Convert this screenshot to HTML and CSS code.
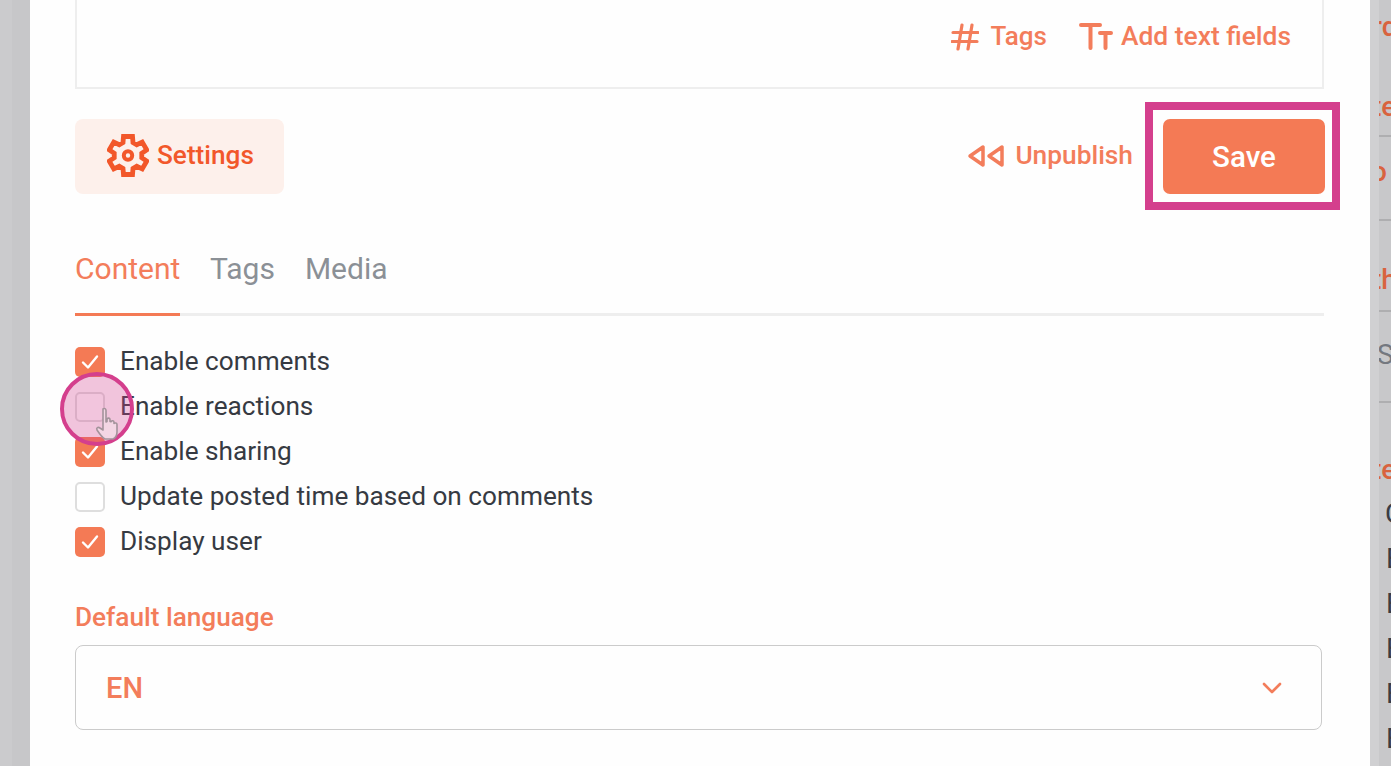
FILE: index.html
```html
<!DOCTYPE html>
<html lang="en">
<head>
<meta charset="utf-8">
<title>Post settings</title>
<link rel="stylesheet" href="styles.css">
</head>
<body>
<div class="stage">
  <div class="gutter-left"></div>
  <main class="panel">
    <section class="editor-box">
      <div class="editor-tool">
        <svg class="icon-hash" viewBox="0 0 28 28" aria-hidden="true"><path d="M11 2 7 26M21 2l-4 24M2 9.500h25M1 18.500h25" fill="none" stroke="currentColor" stroke-width="3.200" stroke-linecap="round"/></svg>
        <span>Tags</span>
      </div>
      <div class="editor-tool tool-text">
        <svg class="icon-tt" viewBox="0 0 34 28" aria-hidden="true"><path d="M2 3h19M11.500 3v23M21 11h11M26.500 11v15" fill="none" stroke="currentColor" stroke-width="4" stroke-linecap="round"/></svg>
        <span>Add text fields</span>
      </div>
    </section>

    <section class="actions">
      <button class="btn-settings">
        <svg class="icon-gear" viewBox="0 0 42 43" aria-hidden="true">
          <path d="M16 8.500 16.500 2.500H25.500L26 8.500 29.760 10.670 35.200 8.100 39.700 15.900 34.760 19.330V23.670L39.700 27.100 35.200 34.900 29.760 32.330 26 34.500 25.500 40.500H16.500L16 34.500 12.240 32.330 6.800 34.900 2.300 27.100 7.240 23.670V19.330L2.300 15.900 6.800 8.100 12.240 10.670Z" fill="none" stroke="currentColor" stroke-width="4.800" stroke-linejoin="miter"/>
          <circle cx="21" cy="21.500" r="4.200" fill="none" stroke="currentColor" stroke-width="4"/>
        </svg>
        <span>Settings</span>
      </button>
      <div class="actions-right">
        <div class="unpublish">
          <svg class="icon-back" viewBox="0 0 38 24" aria-hidden="true"><path d="M16 3v18L3 12zM35 3v18L22 12z" fill="none" stroke="currentColor" stroke-width="3.500" stroke-linejoin="round"/></svg>
          <span>Unpublish</span>
        </div>
        <button class="btn-save">Save</button>
      </div>
      <div class="save-highlight"></div>
    </section>

    <nav class="tabs">
      <div class="tab tab-active">Content</div>
      <div class="tab">Tags</div>
      <div class="tab">Media</div>
    </nav>

    <section class="checks">
      <div class="check-row"><span class="box box-on"><svg viewBox="0 0 30 30" aria-hidden="true"><path d="M8 15.500l5 5 9-11" fill="none" stroke="#fff" stroke-width="2.400" stroke-linecap="round" stroke-linejoin="round"/></svg></span>Enable comments</div>
      <div class="check-row"><span class="box"></span>Enable reactions</div>
      <div class="check-row"><span class="box box-on"><svg viewBox="0 0 30 30" aria-hidden="true"><path d="M8 15.500l5 5 9-11" fill="none" stroke="#fff" stroke-width="2.400" stroke-linecap="round" stroke-linejoin="round"/></svg></span>Enable sharing</div>
      <div class="check-row"><span class="box"></span>Update posted time based on comments</div>
      <div class="check-row"><span class="box box-on"><svg viewBox="0 0 30 30" aria-hidden="true"><path d="M8 15.500l5 5 9-11" fill="none" stroke="#fff" stroke-width="2.400" stroke-linecap="round" stroke-linejoin="round"/></svg></span>Display user</div>
      <div class="click-ring"></div>
      <svg class="cursor-hand" viewBox="0 0 26 36" aria-hidden="true"><path d="M9 3c1.500-1 3-.5 3 1.500V16l1-.5V13c1-1.500 3-1 3 .5v2l1 .2c1-1.500 3-1 3 .5v1.300c1-1 3-.5 3 1V26c0 3-2 6-4 7H11c-2-1-6-6-8-9-1-2 1-3.500 3-2l3 2V4z" fill="#f3d6e4" stroke="#a3939b" stroke-width="1.600" stroke-linejoin="round"/></svg>
    </section>

    <section class="language">
      <div class="language-label">Default language</div>
      <div class="language-select">
        <span>EN</span>
        <svg class="icon-chevron" viewBox="0 0 20 12" aria-hidden="true"><path d="M2 2l8 8 8-8" fill="none" stroke="currentColor" stroke-width="2.600" stroke-linecap="round" stroke-linejoin="round"/></svg>
      </div>
    </section>
  </main>

  <aside class="side">
    <div class="side-row row-a"><span class="frag frag-orange">rd</span></div>
    <div class="side-row row-b"><span class="frag frag-orange">te</span></div>
    <div class="side-row row-c"><span class="frag frag-orange frag-o">o</span></div>
    <div class="side-row row-d"><span class="frag frag-orange">th</span></div>
    <div class="side-row row-e"><span class="frag frag-grey">S</span></div>
    <div class="side-row row-f"><span class="frag frag-orange">te</span></div>
    <div class="side-list">
      <span class="frag-dark frag-c">C</span>
      <span class="frag-dark">E</span>
      <span class="frag-dark">E</span>
      <span class="frag-dark">E</span>
      <span class="frag-dark">E</span>
      <span class="frag-dark">E</span>
    </div>
  </aside>
</div>
</body>
</html>
```
FILE: styles.css
```css
* { box-sizing: border-box; }
html, body { margin: 0; height: 100%; overflow: hidden; }
body { font-family: Roboto, "Liberation Sans", sans-serif; background: #fefefe; }

.stage { display: flex; width: 1391px; height: 766px; overflow: hidden; }
.gutter-left { width: 30px; flex: none; background: linear-gradient(90deg, #cbcbcd 0 12px, #c7c7c9 12px); }

.panel { width: 1340px; flex: none; padding: 0 46px 0 45px; background: #fefefe; position: relative; }

.editor-box {
  height: 89px; padding: 20px 31px 0 0;
  display: flex; justify-content: flex-end; gap: 32px;
  border: 2px solid #eeeeee; border-top: 0;
}
.editor-tool { display: flex; align-items: flex-start; gap: 12px; height: 32px; font-size: 26px; font-weight: 500; line-height: 32px; color: #f37d5b; }
.tool-text { gap: 8px; font-size: 26.400px; }
.icon-hash { width: 28px; height: 28px; margin-top: 3px; }
.icon-tt { width: 34px; height: 28px; margin-top: 2px; }

.actions { position: relative; height: 75px; margin-top: 30px; display: flex; justify-content: space-between; }
.btn-settings {
  width: 209px; height: 75px; padding: 0 0 2px 32px;
  display: flex; align-items: center; gap: 8px;
  border: 0; border-radius: 8px; background: #fdf0eb; color: #f2572a;
  font: 500 26.200px Roboto, sans-serif;
}
.btn-settings span { margin-bottom: 2px; }
.icon-gear { width: 42px; height: 43px; flex: none; }
.actions-right { display: flex; align-items: center; gap: 30px; margin-right: -1px; }
.unpublish { display: flex; align-items: center; gap: 10px; font-size: 26.300px; font-weight: 500; color: #f37d5b; padding-bottom: 4px; }
.icon-back { width: 38px; height: 24px; margin-top: 2px; }
.btn-save {
  width: 162px; height: 75px; border: 0; border-radius: 7px;
  background: #f47a55; color: #fff; font: 500 29.500px Roboto, sans-serif;
}
.save-highlight { position: absolute; left: 1070px; top: -17px; width: 195px; height: 108px; border: 8px solid #d43f8d; }

.tabs { display: flex; gap: 30px; margin-top: 52px; border-bottom: 3px solid #eeeeee; height: 70px; }
.tab { height: 70px; padding-top: 3px; font-size: 30px; line-height: 40px; color: #8b9096; }
.tab-active { width: 105px; color: #f37d5b; border-bottom: 3px solid #f47a55; }

.checks { position: relative; margin-top: 23px; }
.check-row { display: flex; align-items: center; gap: 15px; height: 45px; padding-bottom: 2px; font-size: 26.200px; color: #363a42; }
.box { width: 30px; height: 30px; flex: none; margin-top: 2px; border: 2px solid #dedede; border-radius: 5px; background: #fff; }
.box-on { border: 0; background: #f47a55; }
.box svg { display: block; width: 30px; height: 30px; }
.click-ring {
  position: absolute; left: -15px; top: 33px; width: 74px; height: 74px;
  border: 4px solid #d43f8d; border-radius: 50%; background: rgba(212, 63, 141, .3);
}
.cursor-hand { position: absolute; left: 19px; top: 67px; width: 26px; height: 36px; }

.language { margin-top: 35px; }
.language-label { font-size: 26.200px; font-weight: 500; line-height: 36px; color: #f37d5b; }
.language-select {
  width: 1247px; height: 85px; margin-top: 10px; padding: 0 39px 0 30px;
  display: flex; align-items: center; justify-content: space-between;
  border: 1px solid #cbcbcb; border-radius: 8px;
  font-size: 29px; font-weight: 500; color: #f37d5b;
}
.icon-chevron { width: 20px; height: 12px; }

.side { position: relative; width: 21px; flex: none; overflow: hidden; background: linear-gradient(90deg, #d0d0d2 0 9px, #c8c8ca 9px); }
.side-row { display: flex; align-items: flex-start; overflow: hidden; border-bottom: 2px solid #aeaeb0; margin-left: 9px; }
.row-a { height: 54px; padding-top: 11px; border: 0; }
.row-b { height: 83px; padding-top: 37px; }
.row-c { height: 84px; padding-top: 19px; }
.row-d { height: 91px; padding-top: 43px; }
.row-e { height: 91px; padding-top: 27px; }
.row-f { height: 87px; padding-top: 51px; border: 0; }
.frag { display: block; font-size: 28px; line-height: 32px; font-weight: 500; white-space: nowrap; margin-left: -7px; }
.frag-o { margin-left: -8px; }
.frag-orange { color: #d9633f; }
.frag-grey { color: #74787f; font-weight: 400; margin-left: -2px; }
.side-list { display: flex; flex-direction: column; margin-top: 1px; margin-left: 15px; overflow: hidden; }
.frag-dark { display: block; height: 45px; font-size: 28px; line-height: 45px; color: #3a3d45; margin-left: 1px; }
.frag-c { margin-left: 0; }
```
